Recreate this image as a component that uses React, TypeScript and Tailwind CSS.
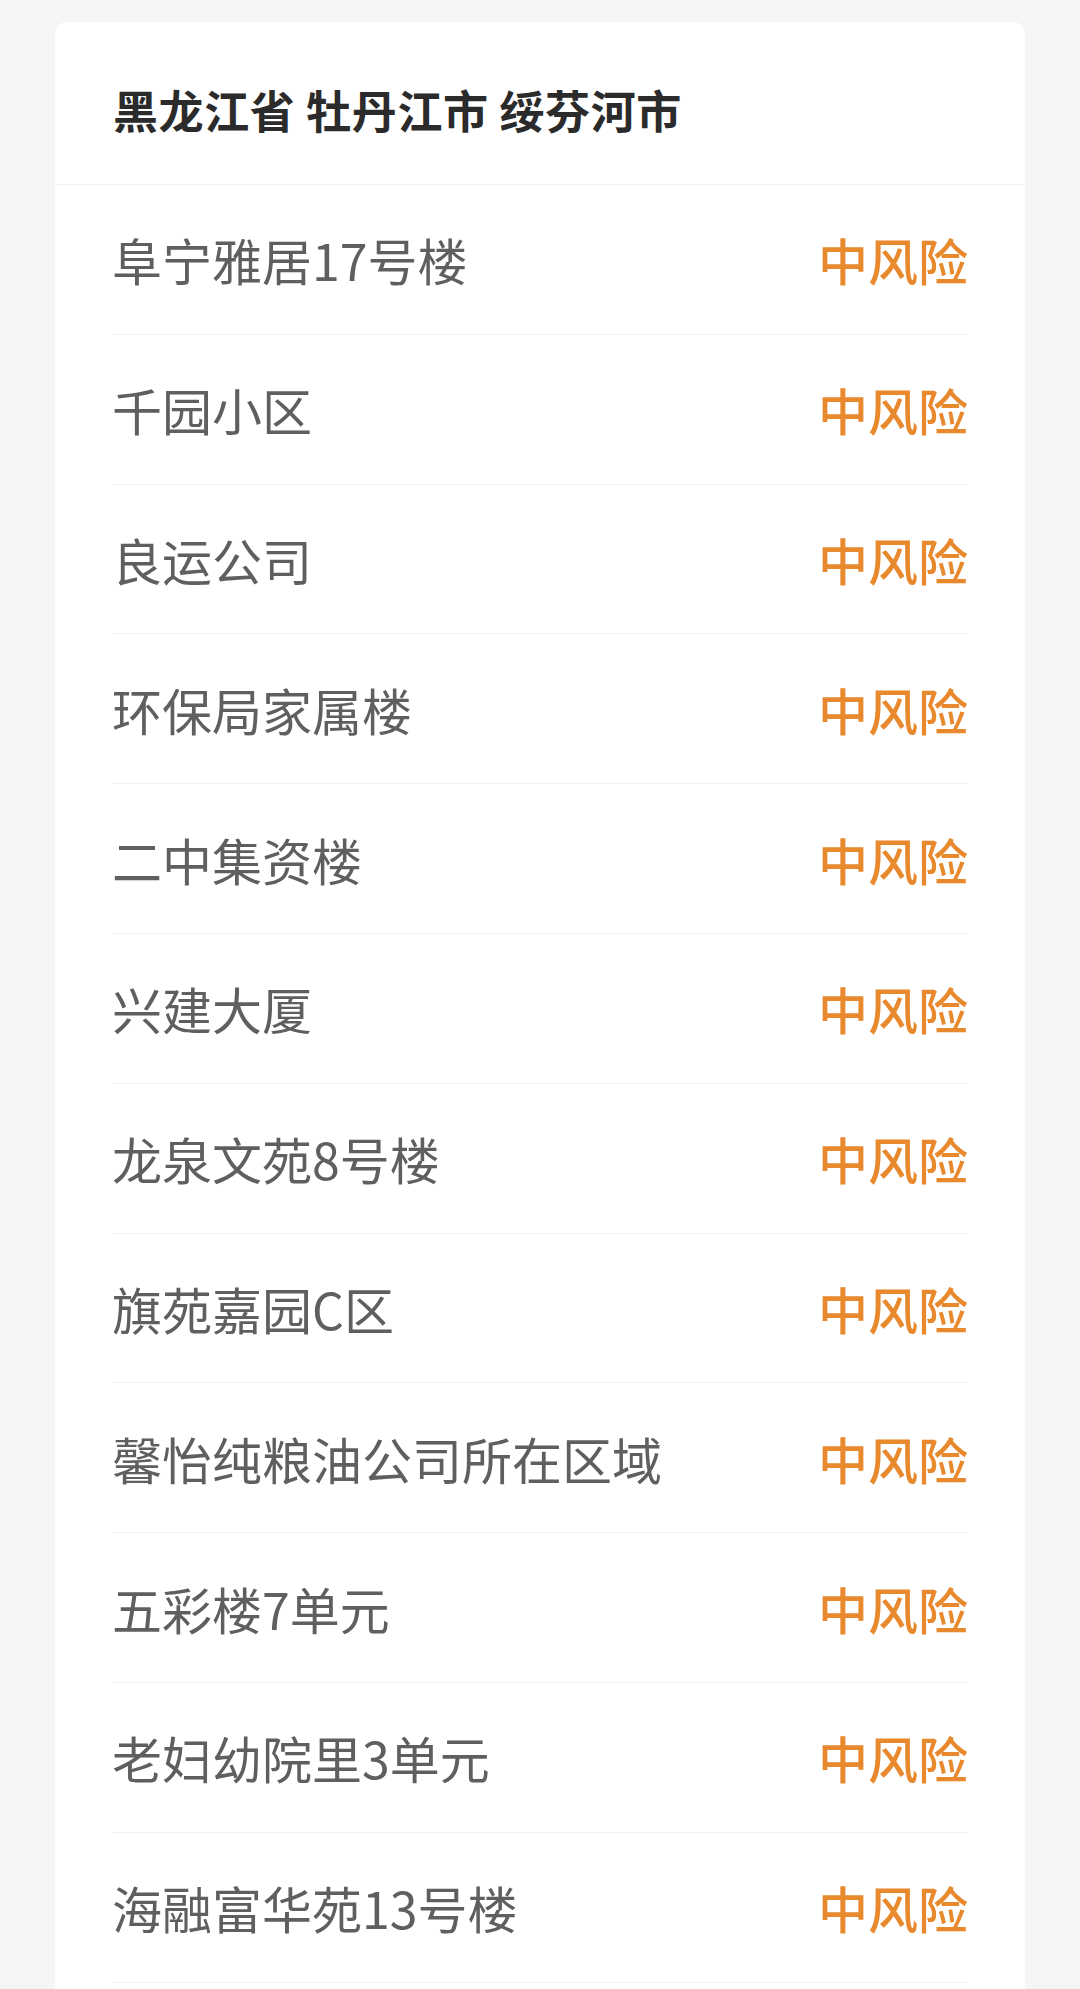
const AREAS = [
  "阜宁雅居17号楼",
  "千园小区",
  "良运公司",
  "环保局家属楼",
  "二中集资楼",
  "兴建大厦",
  "龙泉文苑8号楼",
  "旗苑嘉园C区",
  "馨怡纯粮油公司所在区域",
  "五彩楼7单元",
  "老妇幼院里3单元",
  "海融富华苑13号楼",
];

export default function App() {
  return (
    <div
      className="h-[1989px] w-[1080px] overflow-hidden bg-[#f4f5f7] px-[55px] pt-[22px]"
      style={{ fontFamily: '"Noto Sans CJK SC", "Noto Sans", sans-serif' }}
    >
      <div className="rounded-t-[12px] bg-white pb-[20px]">
        {/* Region title */}
        <div className="flex h-[163px] items-center border-b border-[#f0f0f2] px-[58px] pt-[12px]">
          <h1 className="text-[45px] leading-none font-bold tracking-[0.6px] text-[#2b2b2b]">
            黑龙江省 牡丹江市 绥芬河市
          </h1>
        </div>

        {/* Risk list */}
        <div className="px-[57px]">
          {AREAS.map((name) => (
            <div
              key={name}
              className="flex h-[149.8px] items-center justify-between border-b border-[#f0f0f2]"
            >
              <span className="text-[50px] leading-none text-[#5f5f5f]">
                {name}
              </span>
              <span className="text-[50px] leading-none font-medium text-[#e8892e]">
                中风险
              </span>
            </div>
          ))}
        </div>
      </div>
    </div>
  );
}
